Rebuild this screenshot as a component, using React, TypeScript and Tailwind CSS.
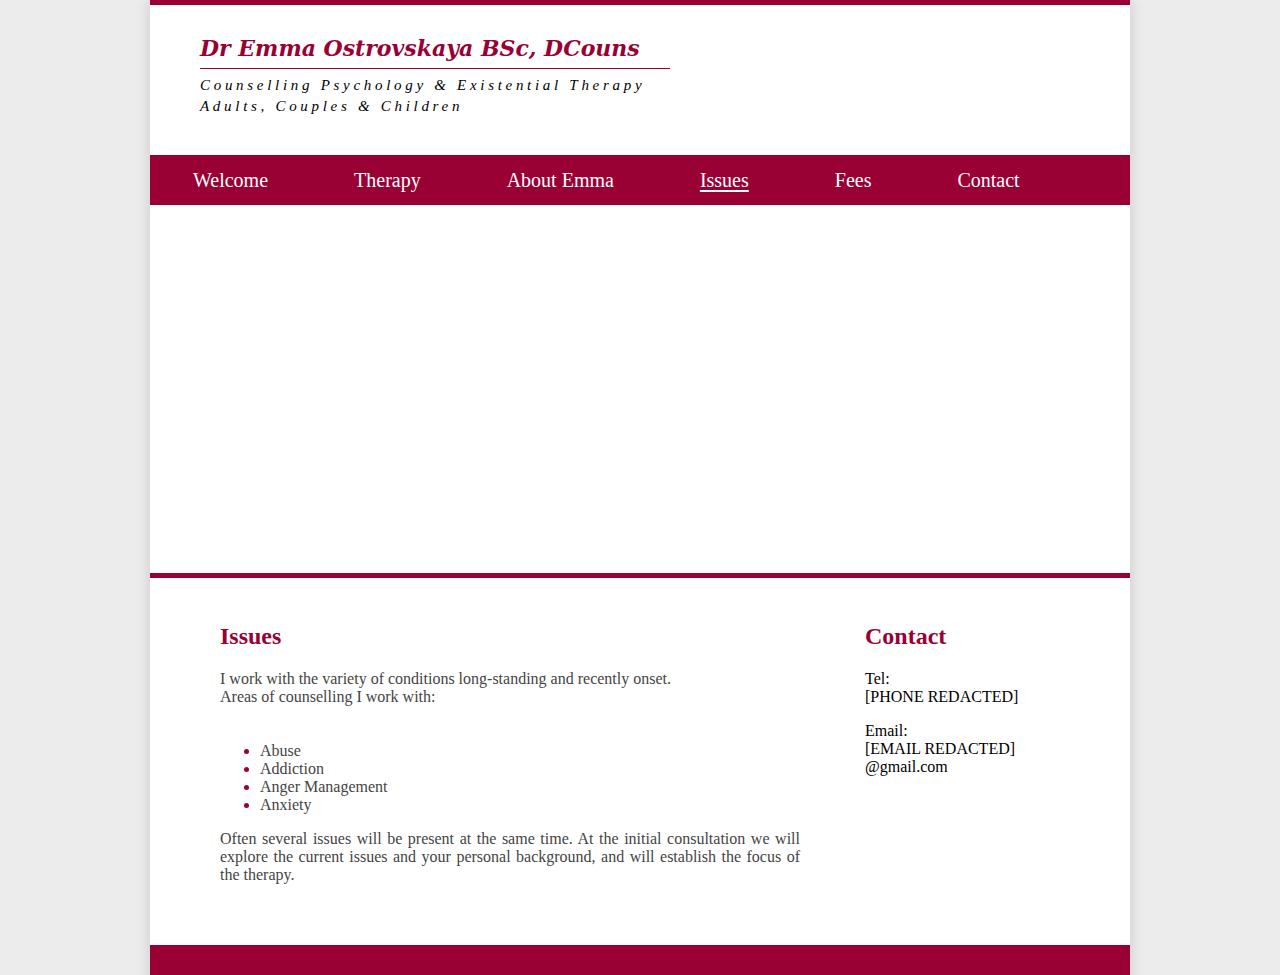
const maroon = "text-[#990033]"

const navItems = ["Welcome", "Therapy", "About Emma", "Issues", "Fees", "Contact"]

const issues = ["Abuse", "Addiction", "Anger Management", "Anxiety"]

export default function App() {
  return (
    <div className="min-h-[975px] bg-[#ececec] font-['Liberation_Serif',serif]">
      <div className="mx-auto w-[980px] bg-white shadow-[0_0_14px_rgba(0,0,0,0.15)]">
        {/* Header */}
        <header className="border-t-[5px] border-[#990033] px-[50px] pb-[38px] pt-[26px]">
          <h1 className={`w-[470px] border-b border-[#990033] pb-[3px] font-['DejaVu_Serif',serif] text-[22px] font-bold italic leading-[34px] ${maroon}`}>
            Dr Emma Ostrovskaya BSc, DCouns
          </h1>
          <p className="mt-[6px] text-[15px] italic leading-[21px] tracking-[3.7px] text-black">
            Counselling Psychology &amp; Existential Therapy
            <br />
            Adults, Couples &amp; Children
          </p>
        </header>

        {/* Navigation */}
        <nav className="flex h-[50px] items-center bg-[#990033]">
          {navItems.map((item) => (
            <a
              key={item}
              href="#"
              className={`px-[43px] text-[20px] leading-[24px] text-white ${item === "Issues" ? "underline underline-offset-[3px]" : ""}`}
            >
              {item}
            </a>
          ))}
        </nav>

        {/* Banner area */}
        <div className="h-[373px] border-b-[5px] border-[#990033] bg-white" />

        {/* Content */}
        <main className="flex px-[70px] pb-[61px] pt-[44px]">
          <section className="w-[580px]">
            <h2 className={`text-[24px] font-bold leading-[28px] ${maroon}`}>Issues</h2>
            <p className="mt-[20px] text-[16px] leading-[18px] text-[#444]">
              I work with the variety of conditions long-standing and recently onset.
              <br />
              Areas of counselling I work with:
            </p>
            <ul className="mt-[36px] list-disc pl-[40px] text-[16px] leading-[18px] text-[#444] marker:text-[#990033]">
              {issues.map((i) => (
                <li key={i}>{i}</li>
              ))}
            </ul>
            <p className="mt-[16px] text-justify text-[16px] leading-[18px] text-[#444]">
              Often several issues will be present at the same time. At the initial consultation we will explore the
              current issues and your personal background, and will establish the focus of the therapy.
            </p>
          </section>

          <aside className="ml-[65px] w-[195px]">
            <h2 className={`text-[24px] font-bold leading-[28px] ${maroon}`}>Contact</h2>
            <p className="mt-[20px] text-[16px] leading-[18px] text-black">
              Tel:
              <br />
              [PHONE REDACTED]
            </p>
            <p className="mt-[16px] text-[16px] leading-[18px] text-black">
              Email:
              <br />
              [EMAIL REDACTED]
              <br />
              @gmail.com
            </p>
          </aside>
        </main>

        {/* Footer */}
        <footer className="h-[60px] bg-[#990033]" />
      </div>
    </div>
  )
}
